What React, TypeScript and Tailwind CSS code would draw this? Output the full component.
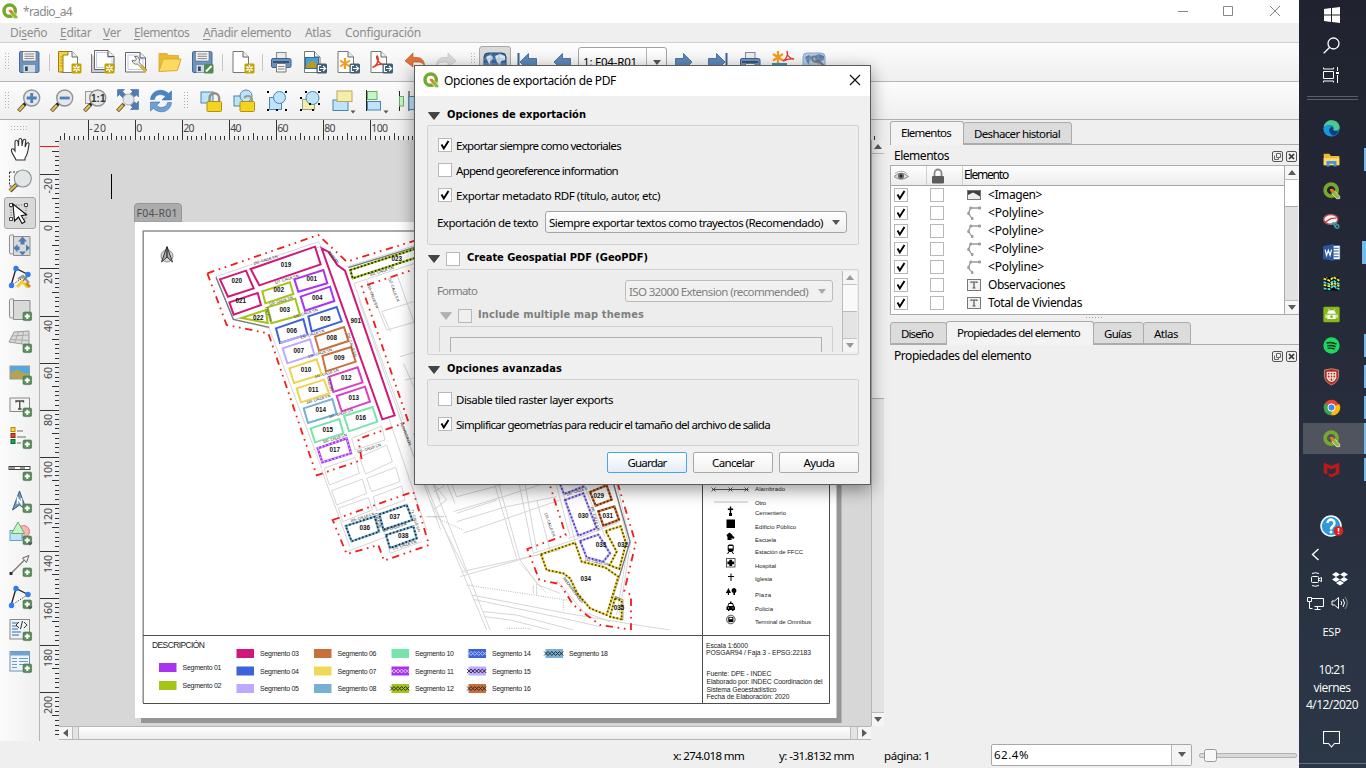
import React, { useLayoutEffect, useRef } from "react";

/* ---------- text helper: tracks a label out to a given width ---------- */
function Fit({ w, children, className = "" }: { w: number; children: string; className?: string }) {
  const ref = useRef<HTMLSpanElement>(null);
  useLayoutEffect(() => {
    const el = ref.current;
    if (!el) return;
    el.style.letterSpacing = "0px";
    const natural = el.getBoundingClientRect().width;
    el.style.letterSpacing = (w - natural) / children.length + "px";
  }, [w, children]);
  return (
    <span ref={ref} className={"inline-block whitespace-pre " + className}>
      {children}
    </span>
  );
}

function Ic({ children, s = 24 }: { children: React.ReactNode; s?: number }) {
  return (
    <svg width={s} height={s} viewBox="0 0 24 24" fill="none" className="shrink-0 overflow-visible">
      {children}
    </svg>
  );
}

/* ---------- shared icon parts ---------- */
const Plus = () => (
  <g>
    <rect x="15" y="15" width="8.6" height="8.6" rx="1.4" fill="#5a8c5a" stroke="#3f7043" strokeWidth=".6" />
    <path d="M19.3 16.7v5.2M16.7 19.3h5.2" stroke="#fff" strokeWidth="2" />
  </g>
);
const Star = () => (
  <g>
    <rect x="13.5" y="13.5" width="10" height="10" rx="1.4" fill="#c4a000" />
    <path d="M18.5 14.7v7.6M15.2 16.6l6.6 3.8M21.8 16.6l-6.6 3.8" stroke="#fff" strokeWidth="1.5" />
    <circle cx="18.5" cy="18.5" r="1.1" fill="#c4a000" />
  </g>
);
const Export = () => (
  <g>
    <rect x="13.5" y="13.5" width="10.5" height="10" rx="1.5" fill="#3f5f74" />
    <path d="M18 15.5h-2.6v6H18M17 18.5h5M20 16l2.6 2.5L20 21" stroke="#fff" strokeWidth="1.2" />
  </g>
);
const Page = ({ x = 3 }: { x?: number }) => (
  <g>
    <path d={`M${x} 1.5h10l5.500 5.500v15.500h-15.500z`} fill="#fff" stroke="#777" />
    <path d={`M${x + 10} 1.5v5.500h5.500`} fill="#eee" stroke="#666" />
  </g>
);
const Glass = ({ children }: { children?: React.ReactNode }) => (
  <g>
    <path d="M8 15l-6.500 7" stroke="#555" strokeWidth="4" />
    <path d="M7 16l-5 5.500" stroke="#f0c030" strokeWidth="2.200" />
    <path d="M9.500 13.500l-2.500 2.500" stroke="#222" strokeWidth="3" />
    <circle cx="14.700" cy="9" r="8" fill="#e4e8ea" stroke="#8d9396" strokeWidth="1.400" />
    {children}
  </g>
);
const Disk = () => (
  <g>
    <rect x="2.500" y="1.500" width="19.500" height="21" rx="1.500" fill="#6b93bf" stroke="#456b95" />
    <rect x="5.500" y="1.500" width="13.500" height="9.500" fill="#f1f1f1" stroke="#666" strokeWidth=".6" />
    <path d="M7.500 4h9.500M7.500 6.300h9.500M7.500 8.600h9.500" stroke="#888" />
    <rect x="6.500" y="15" width="11.500" height="7.500" fill="#d5d9dc" />
    <rect x="8" y="16.500" width="2.800" height="4.500" fill="#2e4f76" />
  </g>
);
const Printer = () => (
  <g>
    <rect x="7.500" y="2.500" width="9.500" height="6" fill="#ececec" stroke="#888" />
    <rect x="2.500" y="8.500" width="19.500" height="9" rx="1.500" fill="#6b93bf" stroke="#3c6390" />
    <path d="M4 12h16" stroke="#31557f" strokeWidth="2" />
    <path d="M7.500 13.500h9.500v8.500h-9.500z" fill="#f4f4f4" stroke="#777" />
    <path d="M9 16.500h6.500M9 19h6.500" stroke="#888" />
  </g>
);
const Qgis = () => (
  <g>
    <circle cx="11.500" cy="11.500" r="8.500" stroke="#75a82c" strokeWidth="5.200" />
    <path d="M13 13h4l6.500 7v3.500h-4.500l-6-6.500z" fill="#8fb93a" stroke="#f4f7ea" strokeWidth="1" />
    <path d="M10 10h4l3 3.500-3.500 2.500-3.500-3.500z" fill="#ee7913" />
  </g>
);
const Arrow = ({ flip = false, bar = false, color = "#5b87b8" }: { flip?: boolean; bar?: boolean; color?: string }) => (
  <Ic>
    <g transform={flip ? "matrix(-1 0 0 1 24 0)" : undefined}>
      <path d="M3.500 8.500h8v-5l8.500 8.500-8.500 8.500v-5h-8z" fill={color} stroke="#3b648f" strokeWidth=".8" />
      {bar && <path d="M21.500 3v18" stroke="#3b648f" strokeWidth="2" />}
    </g>
  </Ic>
);
const Caret = () => <path d="M19.500 21.500h5l-2.500 3z" fill="#555" />;

function Grip({ v = true }: { v?: boolean }) {
  return v ? (
    <svg width="5" height="18" className="shrink-0">
      {[0, 3, 6, 9, 12, 15].map((y) => (
        <path key={y} d={`M0 ${y + 0.5}h1M3 ${y + 0.5}h1`} stroke="#b0b0b0" />
      ))}
    </svg>
  ) : (
    <svg width="17" height="5" className="shrink-0">
      {[0, 3, 6, 9, 12, 15].map((x) => (
        <path key={x} d={`M${x} .5h1M${x} 3.500h1`} stroke="#b0b0b0" />
      ))}
    </svg>
  );
}

const Cell = ({ children, w = "w-[33px]" }: { children: React.ReactNode; w?: string }) => (
  <div className={"flex shrink-0 items-center justify-center " + w}>{children}</div>
);
const Sep = ({ w = "w-[8px]" }: { w?: string }) => (
  <div className={"flex shrink-0 justify-center " + w}>
    <div className="h-[17px] w-px bg-[#c6c6c6]" />
  </div>
);

function Toolbar1() {
  return (
    <div className="flex h-[39px] items-center border-b border-[#b5b5b5] bg-gradient-to-b from-[#fcfcfc] to-[#efefef]">
      <div className="w-[12px] pl-[5px]"><Grip /></div>
      <Cell><Ic><Disk /></Ic></Cell>
      <Sep />
      <Cell><Ic><Page x={4} /><path d="M.5 1.500h9.500v3.500h-5v17h-4.500z" fill="#f5d33f" stroke="#9b8018" /><path d="M2.500 7h2M2.500 10h2M2.500 13h2M2.500 16h2" stroke="#9b8018" strokeWidth=".8" /><Star /></Ic></Cell>
      <Cell><Ic><path d="M.5 4v18.500h15" fill="#ccc" stroke="#777" /><path d="M3.500.5h13.500l6 6v13h-19.500z" fill="#fff" stroke="#666" /><path d="M5.500 2.500h11v5h4.500v10h-15.500z" stroke="#b9cdf0" /><path d="M17 .5v6h6" stroke="#555" fill="#eee" /><Star /></Ic></Cell>
      <Cell><Ic><path d="M1.500 2.500h14.500l5.500 5.500v14h-20z" fill="#fff" stroke="#666" /><path d="M4 5h10v4h5v10.500h-15z" stroke="#b9cdf0" /><path d="M16 2.500v5.500h5.500" stroke="#555" fill="#eee" /><path d="M10.500 6.500l2 2.500-1.500 2-2.800-.8a4 4 0 0 0 5.300 3.800l7.500 8 2-2-8-7.500a4 4 0 0 0-4.500-6z" fill="#eee" stroke="#666" strokeWidth=".9" /><path d="M16.500 15.500l5.500 6" stroke="#d8b43a" strokeWidth="3" /></Ic></Cell>
      <Cell><Ic><path d="M2 21v-17.500h8l1.500 2h10v3.500" fill="#eeb92f" stroke="#e0b040" /><path d="M2 21.500l4-12.500h18l-3.500 11.500z" fill="#fadb60" stroke="#d9aa38" /></Ic></Cell>
      <Cell><Ic><Disk /><rect x="14" y="14" width="9.500" height="9.500" rx="1.500" fill="#4f8a55" /><path d="M16 21.500l5.500-5.500" stroke="#fff" strokeWidth="2" /></Ic></Cell>
      <Sep />
      <Cell w="w-[34px]"><Ic><Page x={2} /><Star /></Ic></Cell>
      <Sep w="w-[4px]" />
      <Cell w="w-[34px]"><Ic><Printer /></Ic></Cell>
      <Cell><Ic><Page x={1.5} /><rect x="2.500" y="7.500" width="13" height="11" fill="#47a0dd" stroke="#2c6fa0" /><path d="M3 15l6-4.500 6 3v4.500h-12z" fill="#b49a2e" /><Export /></Ic></Cell>
      <Cell><Ic><Page x={2} /><path d="M9 8v11M4 10.500l10 6M14 10.500l-10 6" stroke="#f79a1c" strokeWidth="2" /><Export /></Ic></Cell>
      <Cell><Ic><Page x={2} /><path d="M3.500 17.500c5-2 7-8 5-11.500-2.500 0 1 9 7 8.500-3-1.500-8 .5-12 3z" stroke="#e23a2a" strokeWidth="1.500" /><Export /></Ic></Cell>
      <Cell><Ic><path d="M3 11l8-8v4.500h4c5 0 7.500 4 7.500 8-2-3-4-3.500-7.500-3.500h-4v5z" fill="#e0743a" stroke="#c05a22" strokeWidth=".7" /></Ic></Cell>
      <Cell><Ic><path d="M21 11l-8-8v4.500h-4c-5 0-7.500 4-7.500 8 2-3 4-3.500 7.500-3.500h4v5z" fill="#d9dcd9" stroke="#c3c6c3" strokeWidth=".7" /></Ic></Cell>
      <div className="flex w-[16px] shrink-0 justify-center pl-1"><Grip /></div>
      <div className="flex h-[32px] w-[32px] shrink-0 items-center justify-center rounded-[3px] border border-[#a8a8a8] bg-[#dadada]"><Globe /></div>
      <Cell w="w-[34px]"><Arrow flip bar /></Cell>
      <Cell><Arrow flip /></Cell>
      <div className="flex h-[31px] w-[89px] shrink-0 items-center rounded-[3px] border border-[#a3a3a3] bg-gradient-to-b from-white to-[#efefef]">
        <div className="h-full w-[68px] border-r border-[#b5b5b5] pl-[4px] pt-[6px] leading-[16px] text-[11.5px]"><Fit w={54}>1: F04-R01</Fit></div>
        <div className="flex w-[19px] justify-center pt-0"><svg width="8" height="5"><path d="M0 0h8L4 5z" fill="#555" /></svg></div>
      </div>
      <Cell><Arrow /></Cell>
      <Cell><Arrow bar /></Cell>
      <Cell><Ic><Printer /></Ic></Cell>
      <Cell><Ic><path d="M7 1v12M2 4l10 6.500M12 4l-10 6.500" stroke="#f79a1c" strokeWidth="2.200" /><path d="M12 11c4-2 5-7 4-10 0 5 3 8 7 8-4-.5-7 0-11 2z" stroke="#e23a2a" strokeWidth="1.400" /><rect x="1" y="13" width="15" height="9" fill="#3a8fc0" /></Ic></Cell>
      <Cell w="w-[30px]"><Globe tool /></Cell>
    </div>
  );
}
function Globe({ tool = false }: { tool?: boolean }) {
  return (
    <Ic>
      <rect x="1" y="3" width="22" height="18" rx="4" fill={tool ? "#b6cbe2" : "#3e6a9d"} stroke={tool ? "#8aa6c4" : "#274a73"} />
      <path d="M3 7l4-2 3 2-1 3-2 1v4l-2-3zM12 6l5-2 5 2v4l-4 1-1 4-3-3z" fill={tool ? "#557fae" : "#dfe9f2"} />
      <path d="M1 9h22M1 14h22M8 3v18M16 3v18" stroke="#9bb9d6" strokeWidth=".6" />
      {tool && <path d="M12 6a3 3 0 1 0 4 4l6 6" stroke="#777" strokeWidth="2" />}
    </Ic>
  );
}

const Handles = ({ pts }: { pts: number[][] }) => (
  <g>{pts.map(([x, y], i) => <rect key={i} x={x} y={y} width="2" height="2" fill="#000" />)}</g>
);
function Toolbar2() {
  return (
    <div className="flex h-[38px] items-center border-b border-[#b0b0b0] bg-gradient-to-b from-[#fcfcfc] to-[#efefef]">
      <div className="w-[12px] pl-[5px]"><Grip /></div>
      <Cell><Ic><Glass><path d="M14.700 4v10M9.700 9h10" stroke="#4f7fb5" strokeWidth="2.800" /></Glass></Ic></Cell>
      <Cell><Ic><Glass><path d="M9.700 9h10" stroke="#4f7fb5" strokeWidth="2.800" /></Glass></Ic></Cell>
      <Cell><Ic><rect x="2.500" y="2.500" width="12" height="12" fill="#eee" stroke="#999" /><Glass><text x="8" y="12.500" fontSize="10" fontWeight="bold" fill="#333" fontFamily="Liberation Sans, sans-serif">1:1</text></Glass></Ic></Cell>
      <Cell w="w-[34px]"><Ic><path d="M1.500.5h7l-2 2 4 4-3 3-4-4-2 2zM22.500.5v7.500l-2-2-5 4-3-3 4-4.500-2-2zM22.500 20.500h-8l2-2-3-4 3-3 4 3 2-2.500z" fill="#4d7db3" stroke="#335f92" strokeWidth=".5" /><path d="M8 15l-6.500 7" stroke="#555" strokeWidth="4" /><path d="M7 16l-5 5.500" stroke="#f0c030" strokeWidth="2.200" /><circle cx="12.500" cy="10.500" r="5.500" fill="#e5e8ea" stroke="#aaa" /></Ic></Cell>
      <Cell w="w-[32px]"><Ic><path d="M1.500 10.500C2 4 8 0 14 1.500c3 .8 4.500 2 5.500 3l3-2.500v9h-9.500l3.500-3.500c-5-4-11-1-11 3z" fill="#4b84c4" stroke="#2f62a0" strokeWidth=".5" /><path d="M22.500 13.500c-.5 6.500-6.500 10.500-12.500 9-3-.8-4.500-2-5.500-3l-3 2.500v-9h9.500l-3.500 3.500c5 4 11 1 11-3z" fill="#6ca0d8" stroke="#2f62a0" strokeWidth=".5" /></Ic></Cell>
      <div className="flex w-[17px] justify-center pl-[2px]"><Grip /></div>
      <Cell><Ic><rect x="2" y="3" width="12" height="11" fill="#bfe3fa" stroke="#4a85ad" /><path d="M10.500 14v-5a4.800 4.800 0 0 1 9.600 0v5" stroke="#8f8f8f" strokeWidth="2.400" /><rect x="8" y="12.500" width="14.500" height="10" rx="1" fill="#f2d322" stroke="#b29208" /></Ic></Cell>
      <Cell><Ic><rect x="2" y="7" width="13" height="10" fill="#bfe3fa" stroke="#4a85ad" /><circle cx="14" cy="7" r="6" fill="#bfe3fa" stroke="#4a85ad" /><path d="M12 9a4.500 4.500 0 0 1 8 1v4" stroke="#999" strokeWidth="2" /><rect x="8" y="12.500" width="14.500" height="10" rx="1" fill="#f2d322" stroke="#b29208" /></Ic></Cell>
      <Cell><Ic><path d="M4.500 8.500h12v12h-12z" fill="#bfe3fa" stroke="#4a85ad" /><circle cx="14.500" cy="8.500" r="6" fill="#bfe3fa" stroke="#4a85ad" /><Handles pts={[[2, 2], [20, 2], [2, 20], [20, 20], [11, 20]]} /></Ic></Cell>
      <Cell><Ic><path d="M4.500 10.500h12v10h-12z" fill="#f5efa5" stroke="#999" /><circle cx="14.500" cy="9" r="6.500" fill="#bfe3fa" stroke="#4a85ad" /><Handles pts={[[7, 2], [20, 2], [2, 8], [2, 20], [11, 14], [20, 14], [14, 20]]} /></Ic></Cell>
      <Cell><Ic><rect x="2" y="11" width="15" height="10.500" fill="#bfe3fa" stroke="#4a85ad" /><rect x="6" y="2" width="15" height="10.500" fill="#f5efa5" stroke="#b5a66a" /><Caret /></Ic></Cell>
      <Cell><Ic><path d="M2.500 1v21" stroke="#222" /><rect x="3.500" y="2.500" width="9.500" height="8" fill="#c3f6c3" stroke="#69ad69" /><rect x="3.500" y="12.500" width="13" height="8.500" fill="#bfe3fa" stroke="#4a85ad" /><Caret /></Ic></Cell>
      <Cell><Ic><path d="M2.500 2v20M12 2v20" stroke="#222" /><rect x="2.500" y="7.500" width="4" height="9.500" fill="#c3f6c3" stroke="#69ad69" /><rect x="12" y="7.500" width="6" height="13" fill="#bfe3fa" stroke="#4a85ad" /></Ic></Cell>
    </div>
  );
}

/* ---------- left tools ---------- */
const Sheet = () => (
  <g>
    <path d="M5.500 3.500h16.500v19h-16.500z" fill="#d9d9d9" stroke="#8c8c8c" />
    <path d="M5.500 2h-3q-1 0-1 2v15q0 2 1.500 2h1.500q1 0 1-2z" fill="#eee" stroke="#8c8c8c" />
  </g>
);
const Nodes = () => (
  <g>
    <path d="M3 20.500L8 3.500l12 6" stroke="#222" strokeWidth="1.300" />
    <path d="M3 20.500l17-11" stroke="#222" strokeDasharray="1.200 1.500" />
    <circle cx="3.500" cy="20.500" r="2.700" fill="#2d7cf0" />
    <circle cx="8" cy="3.500" r="2.700" fill="#2d7cf0" />
    <circle cx="20" cy="9.500" r="2.700" fill="#2d7cf0" />
  </g>
);
const leftTools: React.ReactNode[] = [
  <g><path d="M8 23c-1-3-3.500-5-4.500-9-.6-2 1-3 2.500-1.500L7 14V5c.3-2.500 2.800-2 3 0l.5 4 .3-6c.5-2.200 2.800-1.800 3 0l.2 6 1-5.500c.7-2 2.700-1.300 2.700 0L17 10l1.500-3.500c1-1.500 3-.5 2.500 1-1 4-.5 9-4 13.500V23z" fill="#fff" stroke="#333" strokeWidth="1.100" /></g>,
  <g><rect x="1.500" y="3" width="15" height="14" stroke="#333" strokeDasharray="2 1.500" /><path d="M9 15l-7 7" stroke="#555" strokeWidth="4" /><path d="M8 16l-6 5.500" stroke="#f0c030" strokeWidth="2.200" /><circle cx="14.800" cy="9.500" r="8.500" fill="#e3e6e7" stroke="#8d9396" strokeWidth="1.200" /></g>,
  <g><rect x="3" y="4" width="15" height="14" stroke="#666" strokeDasharray="1 1.500" /><path d="M1.500 2.500h3v3h-3zM16.500 2.500h3v3h-3zM1.500 16.500h3v3h-3z" fill="#eee" stroke="#444" /><path d="M5 3l1.500 17 4-4 3.500 6.500 3-1.800-3.700-6 5.200-1z" fill="#fff" stroke="#111" strokeWidth="1.100" /></g>,
  <g><Sheet /><path d="M14.500 3.500l4.500 5h-2.500v3h-4v-3h-2.500zM5.500 15l4-4v2.500h2v3.500h-2v2.500zM22 15l-4-3.500v7zM11 18.500h7l-3.500 4z" fill="#4d7db3" /></g>,
  <g><Nodes /><path d="M10 14l5-3 6 7" stroke="#999" strokeWidth="2.500" /><path d="M19 12l-10 9.500" stroke="#777" strokeWidth="1.500" /><path d="M13 15.500l7 7M15 16l-6 6" stroke="#f2cc38" strokeWidth="3" /><path d="M18 18l4 4" stroke="#c88a1c" strokeWidth="3" /></g>,
  <g><Sheet /><Plus /></g>,
  <g><path d="M6 3l15-1v14l-20-3z" fill="#dadada" stroke="#999" /><path d="M4 7l17-1M3 10.500l18 1M10.500 3l-4 11M15.500 2.500l-2 12" stroke="#aaa" /><Plus /></g>,
  <g><rect x="2" y="5" width="19.500" height="13" fill="#4ea9e8" stroke="#999" /><path d="M2.500 12l6-3.500 8 3.500 4.500 1v4.500h-18.500z" fill="#b9a24c" /><Plus /></g>,
  <g><rect x="2" y="5" width="19.500" height="13.500" fill="#f4f4f4" stroke="#888" /><path d="M8 9.500V8h7.500v1.500M11.750 8v8M10 16h3.500" stroke="#444" strokeWidth="1.300" /><Plus /></g>,
  <g><rect x="3" y="2.500" width="4" height="4" fill="#fdd835" stroke="#b8860b" /><rect x="3" y="8.500" width="4" height="4" fill="#e64a19" stroke="#8d2a0a" /><rect x="3" y="14.500" width="4" height="4" fill="#18a558" stroke="#0b6b36" /><path d="M9 6h6M9 12h9M9 18h4" stroke="#999" strokeWidth="1.500" /><Plus /></g>,
  <g><rect x="1" y="9.500" width="21" height="3" fill="#fff" stroke="#444" /><path d="M2 11h5M12 11h5" stroke="#999" strokeWidth="2" /><Plus /></g>,
  <g><path d="M11.500 2l7 19-7-5-7 5z" fill="#6d9bc8" stroke="#38597c" /><path d="M9.500 15V9l4 6V9" stroke="#fff" strokeWidth="1.500" /><Plus /></g>,
  <g><circle cx="15.500" cy="10.500" r="6" fill="#f8b5b5" stroke="#df7777" /><rect x="2" y="9.500" width="12" height="10" fill="#bfe3fa" stroke="#6aa2c7" /><path d="M10 1l6.500 11.500h-13z" fill="#c3f6c3" stroke="#69ad69" /><Plus /><Caret /></g>,
  <g><path d="M3 20.500L19 4.500" stroke="#777" strokeWidth="1.200" /><path d="M14.500 5l6.500-2.500-2.500 7z" fill="#eee" stroke="#666" /><rect x="1.500" y="19" width="3" height="3" fill="#333" /><Plus /></g>,
  <g><Nodes /><Plus /><Caret /></g>,
  <g><rect x="2" y="2.500" width="19.500" height="19.500" fill="#eef2f5" stroke="#888" /><path d="M4 6h6M4 9h5M4 12h6M4 15h9M4 18h7" stroke="#6b9bc8" strokeWidth="1.500" /><path d="M11 5l-3 3 3 3M16 5l3 3-3 3M14.500 4l-2 8" stroke="#333" /><Plus /></g>,
  <g><rect x="2" y="2.500" width="19.500" height="19.500" fill="#eef4f9" stroke="#6b93b8" /><path d="M2.500 4.500h19" stroke="#6fa3d0" strokeWidth="4" /><path d="M4 9.500h5M11 9.500h9M4 12.500h5M11 12.500h9M4 15.500h5M11 15.500h9M4 18.500h5" stroke="#6b9bc8" /><Plus /></g>,
];

function LeftTools() {
  return (
    <div className="flex h-[621px] w-[40px] shrink-0 flex-col items-center border-r border-[#b5b5b5] bg-gradient-to-r from-[#fbfbfb] to-[#efefef] pt-[6px]">
      <div className="mb-[2px] h-[5px]"><Grip v={false} /></div>
      {leftTools.map((t, i) => (
        <div key={i} className={"flex h-[32px] w-[32px] shrink-0 items-center justify-center " + (i === 2 ? "rounded-[3px] border border-[#a5a5a5] bg-[#d9d9d9]" : "")}>
          <Ic>{t}</Ic>
        </div>
      ))}
    </div>
  );
}

/* ---------- rulers ---------- */
const U = 2.3525;
function TopRuler() {
  const ticks: React.ReactNode[] = [];
  for (let v = -32; v < 316; v += 2) {
    const x = Math.round(94.9 + v * U) + 0.5;
    const h = v % 20 === 0 ? 20 : v % 10 === 0 ? 7 : 4;
    ticks.push(<path key={v} d={`M${x} ${20 - h}v${h}`} stroke="#333" />);
    if (v % 20 === 0) ticks.push(<text key={"t" + v} x={x + 0.8} y="11.500" fontSize="10.500" fill="#444" textLength={String(v).length * 5.6}>{v}</text>);
  }
  return <svg width="844" height="20" className="block shrink-0" fontFamily="Noto Sans, sans-serif">{ticks}</svg>;
}
function SideRuler() {
  const ticks: React.ReactNode[] = [];
  for (let v = -34; v <= 218; v += 2) {
    const y = Math.round(81.4 + v * U) + 0.5;
    const h = v % 20 === 0 ? 19 : v % 10 === 0 ? 7 : 4;
    ticks.push(<path key={v} d={`M${19 - h} ${y}h${h}`} stroke="#333" />);
    if (v % 20 === 0) ticks.push(<text key={"t" + v} transform={`translate(11.500 ${y + 3.5}) rotate(-90)`} textAnchor="end" fontSize="10.500" fill="#444">{v}</text>);
  }
  return (
    <svg width="19" height="600" className="block shrink-0" fontFamily="Noto Sans, sans-serif">
      {ticks}
      <path d="M0 6.500h19" stroke="#f01818" />
    </svg>
  );
}

/* ---------- map ---------- */
const blocks: [string, string, string, number, number][] = [
  ["152,147 345,80 362,133 178,196", "#d01878", "019", 258, 142],
  ["60,178 138,152 161,205 84,230", "#d01878", "020", 110, 188],
  ["88,247 173,219 183,255 101,284", "#d01878", "021", 122, 249],
  ["187,214 270,187 280,222 196,250", "#a4c417", "002", 236, 217],
  ["203,262 286,236 300,286 214,310", "#a4c417", "003", 254, 277],
  ["125,294 197,270 203,309", "#a4c417", "022", 175, 301],
  ["283,178 370,150 382,190 295,215", "#a934f0", "001", 335, 182],
  ["302,230 390,200 403,243 315,272", "#a934f0", "004", 352, 240],
  ["325,289 410,261 425,304 335,334", "#3c62dc", "005", 376, 304],
  ["228,325 310,297 322,343 240,369", "#3c62dc", "006", 275, 339],
  ["248,385 330,358 343,404 262,430", "#bbaaff", "007", 296, 398],
  ["345,350 432,321 445,363 357,392", "#c8703c", "008", 395, 361],
  ["367,408 453,381 467,425 378,454", "#c8703c", "009", 418, 421],
  ["268,445 350,418 365,463 282,489", "#eed350", "010", 318, 457],
  ["388,470 473,442 488,487 400,516", "#d840c8", "012", 439, 481],
  ["290,505 372,479 387,520 303,547", "#eed350", "011", 340, 516],
  ["410,528 495,500 510,545 425,574", "#d840c8", "013", 461, 541],
  ["311,565 397,537 410,582 324,609", "#78b0d4", "014", 362, 577],
  ["432,588 518,561 532,605 447,634", "#78e4ac", "016", 482, 601],
  ["332,625 418,597 430,640 345,667", "#78e4ac", "015", 383, 637],
];
const hatched: [string, string, string, string, number, number][] = [
  ["353,685 440,655 453,700 367,727", "#a934f0", "#d9b0f8", "017", 404, 696],
  ["437,918 524,890 537,935 455,964", "#78b0d4", "#1c2c38", "036", 494, 931],
  ["538,883 620,855 637,900 550,929", "#78b0d4", "#1c2c38", "037", 584, 896],
  ["558,945 640,919 650,955 570,984", "#78b0d4", "#1c2c38", "038", 610, 955],
  ["451,150 690,72 694,98 458,175", "#a4c417", "#222", "023", 590, 122],
  ["1080,792 1150,792 1150,800 1092,822", "#bbaaff", "#4a3fa0", "", 0, 0],
  ["1095,840 1150,820 1190,925 1135,947", "#bbaaff", "#4a3fa0", "030", 1150, 895],
  ["1140,963 1195,944 1230,1000 1210,1025 1160,1012", "#bbaaff", "#4a3fa0", "033", 1203, 982],
  ["1170,816 1220,796 1235,839 1187,857", "#c8703c", "#5b2a10", "029", 1196, 834],
  ["1195,874 1243,859 1257,899 1210,917", "#c8703c", "#5b2a10", "031", 1223, 893],
  ["1217,933 1262,919 1278,970 1258,1047 1229,1036 1250,995", "#eed350", "#4c430c", "032", 1268, 982],
  ["1023,1003 1125,968 1145,1025 1215,1042 1255,1070 1220,1185 1170,1165 1132,1120 1110,1075 1090,1060 1040,1050", "#eed350", "#4c430c", "034", 1157, 1083],
  ["1245,1135 1265,1142 1265,1198 1230,1190", "#eed350", "#4c430c", "035", 1257, 1170],
];
const red = [
  "M22 160L355 45L440 125L690 48M22 160L80 315L205 340L350 766L485 720L475 657L625 605L485 200L690 132",
  "M398 900L640 815L687 975L552 1022L535 975L440 1002Z",
  "M1040 765L1097 945L982 987L1018 1080L1080 1092L1120 1155L1200 1215L1293 1229V1125L1273 1113L1307 970L1250 780",
];
const streets = [
  "M48 170L355 65L370 90M48 170L100 298L208 325L365 745M440 140L650 75M462 190L700 112M100 298L125 293",
  "M462 190L610 600M475 235L645 720M500 180L560 330L650 305M590 160L650 330M545 275L640 245M600 410L650 395M610 430L650 520M615 480L660 470M545 275L572 335",
  "M455 655L545 618L555 660L465 690ZM478 712L560 675L577 725L497 762ZM372 745L465 712L478 760L388 795ZM395 812L487 777L500 820L410 855ZM415 865L505 833L517 870L428 905ZM500 775L587 742L600 785L515 815ZM520 830L605 798L615 840L530 872Z",
  "M565 590L680 930M595 580L722 930M630 680L860 1230M655 680L870 1230M640 640L720 840M665 635L730 790M700 790L740 840L700 870M680 890H730",
  "M440 995L560 950M540 880L570 1000L665 965M365 750L450 980M100 165L360 80",
  "M690 840L800 1060M700 815L730 800L740 770M740 790L765 850M750 780L770 830L960 780M760 875L910 830L1080 775M770 905L920 860L1070 830M790 940L1080 840M880 780L950 1015M893 780L960 1020M770 880L890 840M955 780L1000 1000M973 780L1010 990M1010 840L1050 990M780 1070L1115 975M785 1055L1080 990M960 1020L1015 1095L1080 1120",
  "M815 1125L1100 1180L1310 1215L1410 1230M820 1138L1090 1195L1200 1220M850 1175L950 1185L1120 1230M855 1190L930 1200L1050 1230M1000 1095V1120M1010 1090V1125M1070 1080L1150 1175L1230 1205",
  "M1065 778L1110 950M1080 778L1125 965M1000 1000L1130 957L1260 905M1150 790L1215 950M1240 785L1285 970L1250 1185M1247 780L1292 970L1258 1180M1150 825L1200 805M1105 955L1255 905",
];
const dotted = "M700 890L790 930M800 1095L1100 1140M960 1030L1040 1120M1090 1140V1175M920 1225H990V1232M680 890H740";
const streetNames: [number, number, number, string][] = [
  [162, 134, -17, "252 - CALLE S N"], [225, 192, -17, "127 - CALLE S N"], [208, 257, -17, "129 - CALLE S N"], [282, 294, -17, "132 - CALLE S N"],
  [302, 357, -17, "135 - CALLE S N"], [325, 414, -17, "138 - CALLE S N"], [345, 475, -17, "141 - CALLE S N"], [320, 552, -17, "144 - CALLE S N"],
  [388, 595, -17, "147 - CALLE S N"], [370, 670, -17, "150 - CALLE S N"], [472, 700, -17, "103 - CALLE S N"], [383, 97, 52, "BOULEVARD"],
  [502, 195, 70, "110 - CALLE S N"], [565, 175, 70, "112 - CALLE S N"], [510, 168, -17, "102 - CALLE S N"], [600, 610, 68, "RUTA PROVINCIAL"],
  [452, 907, -17, "165 - CALLE S N"], [548, 937, -17, "168 - CALLE S N"], [578, 990, -17, "170 - CALLE S N"], [632, 870, 72, "71 - CALLE S N"], [525, 880, 75, "CALLE S N"],
  [1033, 880, 70, "133 - CALLE S N"], [1100, 827, -17, "140 - CALLE S"], [1172, 860, 75, "141 - CALLE S N"], [1153, 1022, 12, "144 - CALLE S N"], [1088, 1075, 53, "RAMON S FERNANDEZ S"],
  [195, 262, 72, "CALLE S N"], [440, 340, 72, "134 - CALLE S N"], [380, 470, 75, "CALLE S N"],
];
const legendRows: [number, number, string, string, string | null][] = [
  [159, 667.5, "01", "#a934f0", null], [159, 685.5, "02", "#a4c417", null],
  [236.5, 653.5, "03", "#d01878", null], [236.5, 671, "04", "#3c62dc", null], [236.5, 688.5, "05", "#bbaaff", null],
  [314, 653.5, "06", "#c8703c", null], [314, 671, "07", "#eed958", null], [314, 688.5, "08", "#78b0d4", null],
  [391.5, 653.5, "10", "#78e4ac", null], [391.5, 671, "11", "#a934f0", "#e8c8ff"], [391.5, 688.5, "12", "#a4c417", "#222"],
  [468.5, 653.5, "14", "#3c62dc", "#b8c8ff"], [468.5, 671, "15", "#bbaaff", "#222"], [468.5, 688.5, "16", "#c8703c", "#222"],
  [545.5, 653.5, "18", "#78b0d4", "#222"],
];
const symbols: [string, number, number, number, React.ReactNode][] = [
  ["Alambrado", 491, 30, 755, <path d="M-18 -1.500h36M-19 -3.500l4 4M-15 -3.500l-4 4M-2 -3.500l4 4M2 -3.500l-4 4M14 -3.500l4 4M18 -3.500l-4 4" stroke="#333" strokeWidth=".8" fill="none" />],
  ["Otro", 505, 11, 755, <path d="M-16 -3h33" stroke="#666" strokeDasharray="1 1" strokeWidth=".8" />],
  ["Cementerio", 515, 31, 755, <path d="M-.7 -8.500h1.400v2h2v1.400h-2v5h-1.400v-5h-2v-1.400h2zM-1.500 -2h3v3h-3z" />],
  ["Edificio Público", 529, 41, 755, <rect x="-4" y="-9.500" width="8.500" height="8.500" />],
  ["Escuela", 542, 21, 755, <path d="M-4 -7l3-2.500 3 2.500v1l2 1-1 2-2-1v2h-4v-3z" />],
  ["Estación de FFCC", 554, 48, 755, <g><rect x="-2.800" y="-9.500" width="6" height="7" rx="1.500" /><rect x="-1.800" y="-8" width="4" height="2.500" fill="#fff" /><path d="M-3 0l1.500-2.500h3L3 0" fill="none" stroke="#000" /></g>],
  ["Hospital", 568, 21, 755, <g><rect x="-4" y="-9.500" width="8.500" height="8.500" fill="#fff" stroke="#333" strokeWidth=".8" /><path d="M-1.200 -8.300h2.800v1.800h1.900v2.700h-1.900v1.800h-2.800v-1.800h-1.900v-2.700h1.900z" /></g>],
  ["Iglesia", 581, 17, 755, <path d="M.5 -7.500v7.500M-2.500 -4.500h6" stroke="#000" />],
  ["Plaza", 597, 16, 755, <path d="M-2 -9l2.500 5h-2v2h-1.200v-2h-2zM3.500 -9c2.500 0 3.500 4 1 5v2h-1.600v-2c-3-1-2-5 .6-5z" />],
  ["Policía", 611, 18, 755, <path fillRule="evenodd" d="M-2 -8h4.500l1 3 1 1v3h-1.500v1h-1.500v-1h-2.500v1h-1.500v-1h-1.500v-3l1-1zM-1.500 -7l-.6 2h4.500l-.6-2zM-2.500 -3.500h1v1h-1zM2 -3.500h1v1h-1zM-.5 -9.500h1.500v1.500h-1.500z" />],
  ["Terminal de Omnibus", 624, 56, 755, <g><circle cx=".3" cy="-4.500" r="4.300" fill="#ddd" stroke="#333" strokeWidth=".8" /><rect x="-2.200" y="-7" width="5" height="5" rx=".8" /><rect x="-1.200" y="-6.300" width="3" height="1.500" fill="#fff" /></g>],
];
const credits: [string, number, number, number][] = [
  ["Escala 1:6000", 706, 648, 42], ["POSGAR94 / Faja 3 - EPSG:22183", 706, 655, 105], ["Fuente: DPE - INDEC", 706.5, 676, 65],
  ["Elaborado por: INDEC Coordinación del", 706.5, 684, 116], ["Sistema Geoestadístico", 706.5, 692, 70], ["Fecha de Elaboración: 2020", 706.5, 698.500, 83],
];

function MapCanvas() {
  return (
    <svg width="812" height="586" viewBox="59 140 812 586" className="block shrink-0 bg-[#d7d7d7]" fontFamily="Liberation Sans, Arial, sans-serif">
      <path d="M111.500 174v25" stroke="#000" />
      <path d="M134.500 222v-15q0-3.500 3.500-3.500h40q3.500 0 3.500 3.500v15z" fill="#acacac" stroke="#969696" />
      <text x="136.500" y="217" fontSize="10.500" fill="#505050" textLength="41" fontFamily="Noto Sans, sans-serif">F04-R01</text>
      <rect x="141" y="228" width="700.500" height="495" fill="#969696" />
      <rect x="135" y="222" width="701.500" height="496" fill="#fff" />
      <g transform="translate(167 256)">
        <circle cx="0" cy="0" r="6" fill="#d5d5d5" stroke="#777" strokeWidth=".8" />
        <path d="M0 -9.500l5.500 15.500-5.500-5-5.500 5z" fill="#aaa" stroke="#222" strokeWidth=".9" />
        <path d="M0 -9v10" stroke="#111" />
      </g>
      <defs><clipPath id="mapclip"><rect x="143" y="232" width="559" height="398" /></clipPath></defs>
      <g clipPath="url(#mapclip)">
        <g transform="translate(200 220) scale(.33333)" fill="none">
          {streets.map((d, i) => <path key={i} d={d} stroke="#d6d6d6" strokeWidth="3" />)}
          <path d={dotted} stroke="#bbb" strokeWidth="3" strokeDasharray="3 4" />
          <path d="M48 172L100 298L208 322M445 143L690 68M1226 1170L1258 1070L1290 965L1240 790M1245 1130L1268 1140V1200" stroke="#777" strokeWidth="4" />
          {red.map((d, i) => <path key={i} d={d} stroke="#f21d1d" strokeWidth="5.500" strokeDasharray="22 14 5 14 5 14" />)}
          <path d="M365 85L385 95L412 135L435 152L584 586L547 598Z" stroke="#d01878" strokeWidth="6" />
          {blocks.map(([p, c], i) => <polygon key={i} points={p} stroke={c} strokeWidth="6" fill="#fff" />)}
          <path d="M241 369l81-26" stroke="#bbaaff" strokeWidth="6" />
          {hatched.map(([p, c, h], i) => (
            <g key={i}>
              <polygon points={p} stroke={c} strokeWidth="7" />
              <polygon points={p} stroke={h} strokeWidth="5" strokeDasharray="5 6" />
            </g>
          ))}
          {streetNames.map(([x, y, r, t], i) => (
            <text key={i} transform={`translate(${x} ${y}) rotate(${r})`} fontSize="11.500" fill="#333" textLength={t.length * 5}>{t}</text>
          ))}
          <g fontSize="19" fontWeight="bold" fill="#111" textAnchor="middle">
            {blocks.map(([, , t, x, y], i) => <text key={i} x={x} y={y}>{t}</text>)}
            {hatched.map(([, , , t, x, y], i) => <text key={i} x={x} y={y}>{t}</text>)}
            <text x="467" y="308">901</text>
          </g>
        </g>
      </g>
      <path d="M143.200 703v-472h686.300" stroke="#8d8d8d" strokeWidth="1.500" fill="none" />
      <path d="M829.500 231v472.500H143M143 635.500h686.500M702.500 484v219.500" stroke="#4c4c4c" fill="none" />
      <text x="152" y="648" fontSize="8.500" fill="#222" textLength="53">DESCRIPCIÓN</text>
      {legendRows.map(([x, y, t, c, h]) => (
        <g key={t}>
          <rect x={x} y={y - 4.5} width="17.500" height="9" fill={c} />
          {h && (
            <path
              d={[-0.5, 0.5, 1.5, 2.5, 3.5].map((k) => `M${x + 0.5 + k * 3.8} ${y - 2}l4 4m0-4l-4 4`).join("")}
              stroke={h}
              fill="none"
              strokeWidth=".9"
            />
          )}
          <text x={x + 23.5} y={y + 2.5} fontSize="7" fill="#222" textLength="39">{"Segmento " + t}</text>
        </g>
      ))}
      {symbols.map(([t, y, w, x, s]) => (
        <g key={t}>
          <g transform={`translate(730.500 ${y})`} fill="#000">{s}</g>
          <text x={x} y={y + 0.3} fontSize="6" fill="#222" textLength={w}>{t}</text>
        </g>
      ))}
      {credits.map(([t, x, y, w]) => <text key={t} x={x} y={y} fontSize="6.800" fill="#222" textLength={w}>{t}</text>)}
    </svg>
  );
}

/* ---------- controls ---------- */
function Check({ on = false, dim = false }: { on?: boolean; dim?: boolean }) {
  return (
    <svg width="14" height="14" className="shrink-0">
      <rect x=".5" y=".5" width="13" height="13" fill={dim ? "#efefef" : "#fff"} stroke="#b8b8b8" />
      {on && <path d="M3.500 6.500l2.300 4 4.700-7.500" fill="none" stroke="#000" strokeWidth="1.900" />}
    </svg>
  );
}
function Tri({ dir, c = "#5a5a5a", w = 8 }: { dir: "up" | "down" | "left" | "right"; c?: string; w?: number }) {
  const d = { up: "M0 5h8L4 0z", down: "M0 0h8L4 5z", left: "M6 0v8L1 4z", right: "M1 0v8l5-4z" }[dir];
  return <svg width={w} height={dir === "up" || dir === "down" ? (w * 5) / 8 : w} viewBox={dir === "up" || dir === "down" ? "0 0 8 5" : "0 0 8 8"}><path d={d} fill={c} /></svg>;
}
const Fold = ({ dim = false }: { dim?: boolean }) => (
  <svg width="12" height="8" className="shrink-0"><path d="M.5.500h11l-5.500 7z" fill={dim ? "#b0b0b0" : "#444"} stroke={dim ? "#aaa" : "#222"} strokeWidth=".7" /></svg>
);
const DockButtons = () => (
  <div className="flex gap-[3px]">
    <svg width="11" height="11" fill="none"><rect x=".5" y=".5" width="10" height="10" rx="1.500" stroke="#555" /><path d="M4.500 2.500h4v4h-4zM2.500 4.500v4h4v-2" stroke="#666" /></svg>
    <svg width="11" height="11" fill="none"><rect x=".5" y=".5" width="10" height="10" rx="1.500" stroke="#555" /><path d="M3 3l5 5M8 3L3 8" stroke="#333" strokeWidth="1.700" /></svg>
  </div>
);

/* ---------- right dock ---------- */
const rows: [string, number, string][] = [
  ["<Imagen>", 54, "img"], ["<Polyline>", 56, "poly"], ["<Polyline>", 56, "poly"], ["<Polyline>", 56, "poly"], ["<Polyline>", 56, "poly"], ["Observaciones", 77, "T"], ["Total de Viviendas", 94, "T"],
];
const RowIcon = ({ k }: { k: string }) => (
  <svg width="15" height="14" fill="none" className="shrink-0">
    {k === "img" && <g><rect x=".5" y="2.500" width="13" height="9" fill="#eee" stroke="#777" /><path d="M1 3h12v5.500l-4-2.500L6 4.500 1 7z" fill="#3f3f3f" /></g>}
    {k === "poly" && <g stroke="#999"><path d="M13 2H3.500L1.500 7.500l3.500 5" strokeWidth="1.300" /><path d="M11.500 1h2v2h-2zM3 1h1.500v2H3zM.8 6.500h1.500v2H.8zM4.500 11.500h1.500v2h-1.500z" fill="#aaa" /></g>}
    {k === "T" && <g><rect x=".5" y="1.500" width="13" height="11" fill="#f2f2f2" stroke="#777" /><path d="M4 5V4h6v1M7 4v6M5.500 10h3" stroke="#555" strokeWidth="1.200" /></g>}
  </svg>
);
const Tab = ({ w, fit, on, children }: { w: string; fit: number; on?: boolean; children: string }) => (
  <div className={"flex items-center rounded-t-[3px] border border-[#ababab] pl-[10px] " + w + (on ? " -mb-px h-[24px] border-b-0 bg-[#f3f3f3] pb-[1px]" : " h-[22px] bg-[#dcdcdc] pt-[1px]")}>
    <Fit w={fit}>{children}</Fit>
  </div>
);
function RightDock() {
  return (
    <div className="flex w-[415px] shrink-0 flex-col bg-[#efefef] pl-[6px] text-[11.5px]">
      <div className="flex h-[25px] shrink-0 items-end border-b border-[#ababab]">
        <Tab w="w-[74px]" fit={50} on>Elementos</Tab>
        <Tab w="w-[109px] -ml-px" fit={86}>Deshacer historial</Tab>
      </div>
      <div className="flex h-[20px] shrink-0 items-center justify-between pl-1 pr-[2px] pt-[2px] text-[12px]"><Fit w={55}>Elementos</Fit><DockButtons /></div>
      <div className="flex h-[150px] shrink-0 border border-r-0 border-[#ababab] bg-white">
        <div className="flex min-w-0 flex-1 flex-col">
          <div className="flex h-[20px] shrink-0 border-b border-[#a5a5a5] bg-gradient-to-b from-white to-[#ececec]">
            <div className="flex w-[36px] items-center border-r border-[#cfcfcf] pl-[2px]">
              <svg width="17" height="12" fill="none"><path d="M1 6.500Q8 0 15.500 6.500Q8 12 1 6.500z" fill="#ddd" stroke="#888" /><circle cx="8" cy="6" r="3" fill="#666" /><circle cx="8" cy="6" r="1.200" fill="#222" /><path d="M2 3.500Q8 -1 14 3.500" stroke="#aaa" /></svg>
            </div>
            <div className="flex w-[36px] items-center border-r border-[#cfcfcf] pl-[4px]">
              <svg width="14" height="16" fill="none"><path d="M3.500 8V5a3.500 3.500 0 0 1 7 0v3" stroke="#888" strokeWidth="1.800" /><rect x="1" y="8" width="12" height="7.500" rx="1" fill="#5c5c5c" /></svg>
            </div>
            <div className="pl-[1px] pt-[1px] text-[12px] leading-[16px]"><Fit w={44}>Elemento</Fit></div>
          </div>
          {rows.map(([t, w, k], i) => (
            <div key={i} className="flex h-[18px] shrink-0 items-center pl-[3px]">
              <div className="w-[36px]"><Check on /></div>
              <div className="w-[37px]"><Check /></div>
              <div className="w-[21px]"><RowIcon k={k} /></div>
              <div className="-mt-[1px] text-[12px] leading-[16px]"><Fit w={w}>{t}</Fit></div>
            </div>
          ))}
        </div>
        <div className="flex w-[14px] flex-col border-l border-[#ababab] bg-[#e2e2e2]">
          <div className="flex h-[14px] items-center justify-center border-b border-[#bbb] bg-[#f6f6f6]"><Tri dir="up" /></div>
          <div className="h-[27px] border-b border-[#ababab] bg-white" />
          <div className="flex-1" />
          <div className="flex h-[14px] items-center justify-center border-t border-[#bbb] bg-[#f6f6f6]"><Tri dir="down" /></div>
        </div>
        <div className="w-[1px] bg-[#f0f0f0]" />
      </div>
      <div className="flex h-[5px] justify-center pt-[1px]"><svg width="17" height="3">{[0, 3, 6, 9, 12, 15].map((x) => <rect key={x} x={x} y="1" width="1" height="1" fill="#a5a5a5" />)}</svg></div>
      <div className="flex h-[25px] shrink-0 items-end border-b border-[#ababab]">
        <Tab w="w-[57px]" fit={32}>Diseño</Tab>
        <Tab w="w-[148px] -ml-px" fit={123} on>Propiedades del elemento</Tab>
        <Tab w="w-[51px] -ml-px" fit={27}>Guías</Tab>
        <Tab w="w-[48px] -ml-px" fit={24}>Atlas</Tab>
      </div>
      <div className="flex h-[20px] shrink-0 items-center justify-between pl-1 pr-[2px] pt-[2px] text-[12px]"><Fit w={137}>Propiedades del elemento</Fit><DockButtons /></div>
    </div>
  );
}

/* ---------- dialog ---------- */
const headFont = " font-bold font-['DejaVu_Sans_Condensed','DejaVu_Sans','Noto_Sans',sans-serif] text-[11px]";
const Option = ({ w, on, children }: { w: number; on?: boolean; children: string }) => (
  <div className="mb-[11px] flex h-[14px] items-center gap-[4px]"><Check on={on} /><span className="pt-[1px]"><Fit w={w}>{children}</Fit></span></div>
);
const Combo = ({ cls, w, dim, children }: { cls: string; w: number; dim?: boolean; children: string }) => (
  <div className={"flex h-[22px] items-center justify-between rounded-[3px] border pl-[3px] pr-[6px] " + cls + (dim ? " border-[#bbb] bg-[#f1f1f1]" : " border-[#a3a3a3] bg-gradient-to-b from-white to-[#eeeeee]")}>
    <span className="pt-[1px]"><Fit w={w}>{children}</Fit></span><Tri dir="down" c={dim ? "#aaa" : "#555"} />
  </div>
);
const Btn = ({ w, main, children }: { w: number; main?: boolean; children: string }) => (
  <div className={"flex h-[21px] w-[80px] items-center justify-center rounded-[2px] border bg-gradient-to-b " + (main ? "border-[#43a6ef] from-white to-[#e4edf5]" : "border-[#a8a8a8] from-white to-[#f1f1f1]")}><Fit w={w}>{children}</Fit></div>
);
function ExportDialog() {
  return (
    <div className="absolute left-[414px] top-[65px] flex h-[420px] w-[457px] flex-col border border-[#5c5c5c] bg-[#f0f0f0] text-[11.5px] shadow-[0_5px_16px_rgba(0,0,0,0.4)]">
      <div className="flex h-[30px] items-center bg-white pb-[2px] pl-[8px] pr-[9px]">
        <Ic s={16}><Qgis /></Ic>
        <span className="ml-[5px] flex-1 pt-[1px] text-[12px]"><Fit w={172}>Opciones de exportación de PDF</Fit></span>
        <svg width="12" height="12"><path d="M1 1l10 10M11 1L1 11" stroke="#111" strokeWidth="1.200" /></svg>
      </div>
      <div className="pl-[12px] pr-[11px]">
        <div className={"flex h-[29px] items-center gap-[7px] pl-[1px] pt-[10px]" + headFont}><Fold /><Fit w={139}>Opciones de exportación</Fit></div>
        <div className="h-[120px] rounded-[2px] border border-[#d2d2d2] bg-[#ededed] pl-[10px] pt-[12px]">
          <Option w={165} on>Exportar siempre como vectoriales</Option>
          <Option w={162}>Append georeference information</Option>
          <Option w={204} on>Exportar metadato RDF (título, autor, etc)</Option>
          <div className="-mt-[2px] flex items-center gap-[7px] -ml-px"><span className="pt-[1px]"><Fit w={101}>Exportación de texto</Fit></span><Combo cls="w-[302px]" w={274}>Siempre exportar textos como trayectos (Recomendado)</Combo></div>
        </div>
        <div className={"flex h-[24px] items-center gap-[7px] pl-[1px] pt-[3px]" + headFont}><Fold /><div className="-ml-px"><Check /></div><Fit w={181}>Create Geospatial PDF (GeoPDF)</Fit></div>
        <div className="flex h-[86px] overflow-hidden rounded-[2px] border border-[#d2d2d2] bg-[#ededed] pb-[2px] pt-[1px] text-[#7f7f7f]">
          <div className="flex w-[405px] flex-col overflow-hidden pl-[9px] pt-[9px]">
            <div className="flex shrink-0 items-center justify-between"><Fit w={40}>Formato</Fit><Combo dim cls="w-[208px]" w={179}>ISO 32000 Extension (recommended)</Combo></div>
            <div className={"flex h-[24px] shrink-0 items-center gap-[6px] pl-[3px] pt-[3px]" + headFont}><Fold dim /><Check dim /><Fit w={166}>Include multiple map themes</Fit></div>
            <div className="ml-[2px] h-[30px] shrink-0 rounded-t-[2px] border border-b-0 border-[#d0d0d0] px-[10px] pt-[10px]"><div className="h-[20px] border border-b-0 border-[#b0b0b0]" /></div>
          </div>
          <div className="ml-[9px] flex w-[15px] flex-col border-l border-[#bbb] bg-[#e4e4e4]">
            <div className="flex h-[14px] items-center justify-center border-b border-[#c4c4c4] bg-[#f5f5f5]"><Tri dir="up" c="#999" /></div>
            <div className="h-[27px] border-b border-[#bbb] bg-[#f9f9f9]" />
            <div className="flex-1" />
            <div className="flex h-[14px] items-center justify-center border-t border-[#c4c4c4] bg-[#f5f5f5]"><Tri dir="down" c="#999" /></div>
          </div>
        </div>
        <div className={"flex h-[24px] items-center gap-[7px] pl-[1px] pt-[5px]" + headFont}><Fold /><Fit w={115}>Opciones avanzadas</Fit></div>
        <div className="h-[67px] rounded-[2px] border border-[#d2d2d2] bg-[#ededed] pl-[10px] pt-[12px]">
          <Option w={157}>Disable tiled raster layer exports</Option>
          <Option w={314} on>Simplificar geometrías para reducir el tamaño del archivo de salida</Option>
        </div>
        <div className="flex justify-end gap-[6px] pt-[6px]"><Btn w={39} main>Guardar</Btn><Btn w={42}>Cancelar</Btn><Btn w={31}>Ayuda</Btn></div>
      </div>
    </div>
  );
}

/* ---------- taskbar ---------- */
const apps: { y: string; on?: number; ic: React.ReactNode }[] = [
  { y: "edge", ic: <g><circle cx="12" cy="12" r="11.500" fill="#1779c9" /><path d="M1 10C2 3 8 .5 12 .5c8 0 12 6 11.500 10.500-.5 4-6 4.500-9 3 2-4-1-7-5-7-5 0-8 3-8.500 3z" fill="#4cc98c" /><path d="M1 11c3-4 9-5 11-1-5 2-4 9 2 12-8 3-14-4-13-11z" fill="#1599d8" /><path d="M12 10c3 0 3 3 2 4 3 2 6 2 8 1-1 3-4 6-8 7-6-3-7-10-2-12z" fill="#0e3f7c" /></g> },
  { y: "folder", on: 1, ic: <g><path d="M1 20V4h8l2 3h12v13z" fill="#f5b82e" /><path d="M1 10h22v10H1z" fill="#ffda6b" /><path d="M5 22v-8h14v8h-4v-4H9v4z" fill="#3f96dc" /></g> },
  { y: "qgis", ic: <Qgis /> },
  { y: "snip", ic: <g><ellipse cx="11" cy="9" rx="10" ry="7" fill="#f3f3f3" stroke="#b8484a" strokeWidth="2" /><path d="M3 13l8-5 8-1" stroke="#c33" strokeWidth="1.600" /><path d="M10 16l10-2M14 13l4 8" stroke="#49a" strokeWidth="2.200" /><circle cx="20" cy="19" r="2.500" stroke="#49a" strokeWidth="2" /></g> },
  { y: "word", on: 2, ic: <g><rect x="12" y="2" width="12" height="20" fill="#fff" stroke="#2b579a" /><path d="M15 6h7M15 10h7M15 14h7M15 18h7" stroke="#2b579a" strokeWidth="1.500" /><path d="M0 3l15-3v24L0 21z" fill="#2b579a" /><path d="M3 8l2 8 2.500-7L10 16l2-8" stroke="#fff" strokeWidth="1.700" /></g> },
  { y: "mesh", ic: <g><path d="M2 3h20v19H2z" fill="#0a0a0a" /><path d="M1 5l8 3 6-5 8 5M1 14l8 2 6-5 8 5" stroke="#f4ea3a" strokeWidth="2.600" strokeDasharray="4 1.500" /><path d="M1 10l8 3 6-5 8 5M1 19l8 1 6-5 8 5" stroke="#4be0e8" strokeWidth="2.600" strokeDasharray="4 1.500" /><path d="M5 3l15 18" stroke="#fff" strokeDasharray="2 3" /></g> },
  { y: "android", ic: <g><rect x=".5" y="1" width="23" height="22" rx="2" fill="#86b817" /><path d="M6 11a6 5 0 0 1 12 0zM6 12.500h12v6H6zM3.500 12h1.500v5H3.500zM19 12h1.500v5H19z" fill="#fff" /><path d="M7.500 4l1.500 3M16.500 4L15 7" stroke="#fff" /><circle cx="12" cy="15" r="2" fill="#86b817" /></g> },
  { y: "spotify", on: 1, ic: <g><circle cx="12" cy="12" r="11.500" fill="#1ed760" /><path d="M5 8.500q7-2 14 1.500M6 12.500q6-1.500 12 1.300M6.500 16q5-1 10 1.200" stroke="#1a2a20" strokeWidth="1.900" /></g> },
  { y: "shield", on: 1, ic: <g><path d="M2 3q10-4 20 0v9q-1 8-10 12Q3 20 2 12z" fill="#b32a1c" stroke="#e9a79e" /><path d="M6 6h12v8q-2 4-6 5-4-1-6-5zM6 10h12M6 14h12M10 6v12M14 6v12" stroke="#fff" strokeWidth="1.500" /></g> },
  { y: "chrome", on: 1, ic: <g><circle cx="12" cy="12" r="11" fill="#e84435" /><path d="M12 12L2.500 6.500A11 11 0 0 0 12 23z" fill="#34a853" /><path d="M12 12l11-5a11 11 0 0 1-11 16z" fill="#fbbc05" /><circle cx="12" cy="12" r="5.500" fill="#fff" /><circle cx="12" cy="12" r="4.200" fill="#4285f4" /></g> },
  { y: "active", on: 1, ic: <Qgis /> },
  { y: "mcafee", on: 1, ic: <path d="M1 2l11 5 11-5v16l-11 5-4-2v-4l4 2 6-3V9l-6 3-6-3v10l-5-2z" fillRule="evenodd" fill="#c01818" /> },
];
function Taskbar() {
  return (
    <div className="flex w-[67px] shrink-0 flex-col bg-gradient-to-b from-[#20222f] to-[#2c3747] font-['Open_Sans','Noto_Sans',sans-serif] text-[12px] text-white">
      <div className="flex h-[30px] items-center justify-center pr-[2px]"><svg width="16" height="16"><path d="M0 2l7-1v6.500H0zM8 .9L16 0v7.500H8zM0 8.500h7V15l-7-1zM8 8.500h8V16l-8-1z" fill="#fff" /></svg></div>
      <div className="flex h-[30px] items-center justify-center pr-[2px]"><svg width="17" height="17" fill="none"><circle cx="10.500" cy="6.500" r="5.500" stroke="#fff" strokeWidth="1.300" /><path d="M6.500 10.500L.7 16.300" stroke="#fff" strokeWidth="1.300" /></svg></div>
      <div className="flex h-[30px] items-center justify-center pr-[2px]"><svg width="17" height="16" fill="none" stroke="#fff"><path d="M.5 4.500h10v7H.5zM.5.500v1.500h10V.500M.5 15.500V14h10v1.500M14.500 0v4M14.500 8v8" /><path d="M13 6h3" strokeWidth="2" /></svg></div>
      <div className="mx-2 mt-[6px] h-[4px] border-y border-[#5b5f6b]" />
      <div className="mt-[13px]">
        {apps.map((a) => (
          <div key={a.y} className={"flex h-[31px] items-center " + (a.y === "active" ? "ml-[4px] bg-[#4f545f] pl-[20px]" : "pl-[24px]")}>
            <Ic s={17}>{a.ic}</Ic>
            <div className="flex-1" />
            {a.on && <div className={"bg-[#76b9ed] " + (a.y === "active" ? "h-[31px] " : "h-[23px] ") + (a.on === 2 ? "w-[4px]" : "w-[2px]")} />}
          </div>
        ))}
      </div>
      <div className="mt-[29px] flex h-[25px] pl-[21px]"><svg width="25" height="25" fill="none"><circle cx="11" cy="12" r="10" fill="#2e9bd6" stroke="#fff" strokeWidth="1.500" /><path d="M7.500 9a3.500 3.500 0 1 1 5.500 3c-1.500 1-2 1.500-2 3.500" stroke="#fff" strokeWidth="2.500" /><circle cx="11" cy="18" r="1.500" fill="#fff" /><circle cx="18.500" cy="17" r="4.800" fill="#e02020" /><path d="M18.500 14v3.500M18.500 18.700v1.300" stroke="#fff" strokeWidth="1.500" /></svg></div>
      <div className="mt-[9px] pl-[12px]"><svg width="9" height="13" fill="none"><path d="M7.500 1L1.500 6.500l6 5.500" stroke="#fff" strokeWidth="1.400" /></svg></div>
      <div className="mt-[10px] flex h-[16px] items-center pl-[10px]">
        <svg width="15" height="15" fill="none" stroke="#fff"><rect x="2.500" y="4.500" width="7" height="6" rx="1" /><path d="M9.500 7l3-1.500v4l-3-1.500M3 1.500q3-1.500 7 0M3 13.500q3 1.500 7 0" /></svg>
        <svg width="16" height="14" viewBox="0 0 16 14" className="ml-[8px]"><path d="M4 0l4 2.500L4 5 0 2.500zM12 0l4 2.500L12 5 8 2.500zM4 5l4 2.500L4 10 0 7.500zM12 5l4 2.500-4 2.500-4-2.500zM8 8.500l4 2.500-4 2.500L4 11z" fill="#fff" /></svg>
      </div>
      <div className="mt-[8px] flex h-[16px] items-center pl-[8px]">
        <svg width="17" height="15" fill="none" stroke="#fff"><path d="M4.500 2.500h12v8h-9M10.500 10.500v3M7.500 13.500h6M.5 1.500h4v4h-4zM2.500 5.500v7h3" /></svg>
        <svg width="17" height="14" fill="none" stroke="#fff" className="ml-[7px]"><path d="M1 5h2.500l4-3.500v11L3.500 9H1z" /><path d="M10 5q1.500 2 0 4M12 3q3 4 0 8" /><path d="M14 1q4.500 6 0 12" stroke="#888" /></svg>
      </div>
      <div className="mt-[12px] flex h-[17px] justify-center pr-[2px] leading-[17px]"><Fit w={18} className="text-[11px]">ESP</Fit></div>
      <div className="mt-[21px] flex flex-col items-center pr-[1px] leading-[17.500px]"><Fit w={27}>10:21</Fit><Fit w={37}>viernes</Fit><Fit w={52}>4/12/2020</Fit></div>
      <div className="mt-[17px] flex justify-center pr-[2px]"><svg width="17" height="17" fill="none"><path d="M.5.500h16v12h-5l-3 3.500-3-3.500h-5z" stroke="#fff" strokeWidth="1.100" /></svg></div>
      <div className="mt-[15px] h-px bg-[#6a707c]" />
    </div>
  );
}

const menus: [string, string, string][] = [
  ["Di", "s", "eño"], ["", "E", "ditar"], ["", "V", "er"], ["", "E", "lementos"], ["", "A", "ñadir elemento"], ["Atlas", "", ""], ["Configuración", "", ""],
];
const menuTrack = ["tracking-[-0.300px]", "tracking-[-0.300px]", "tracking-[-0.200px]", "tracking-[-0.450px]", "tracking-[-0.400px]", "tracking-[-0.350px]", "tracking-[-0.250px]"];
const menuW = ["w-[50px]", "w-[43px]", "w-[31px]", "w-[69px]", "w-[102px]", "w-[40px]", "w-[90px]"];

export default function App() {
  return (
    <div className="relative flex h-[768px] w-[1366px] overflow-hidden bg-[#efefef] font-['Noto_Sans','Open_Sans',sans-serif] text-black">
      <div className="flex w-[1299px] shrink-0 flex-col">
        <div className="flex h-[23px] shrink-0 items-center bg-white pb-[1px] pl-[2px]">
          <Ic s={16}><Qgis /></Ic>
          <span className="ml-[5px] flex-1 pt-[1px] text-[12px] text-[#8a8a8a]"><Fit w={49}>*radio_a4</Fit></span>
          <svg width="104" height="12" fill="none" stroke="#888" className="mr-[18px]"><path d="M1 6.500h10M46.500 1.500h9v9h-9zM93 1l10 10M103 1L93 11" /></svg>
        </div>
        <div className="flex h-[20px] shrink-0 items-center border-b border-[#cfcfcf] bg-[#efefef] pl-[10px] pt-[1px] text-[12px] text-[#8d8d8d]">
          {menus.map(([a, b, c], i) => (
            <div key={i} className={"shrink-0 whitespace-nowrap " + menuW[i] + " " + menuTrack[i]}>{a}<span className="underline underline-offset-2">{b}</span>{c}</div>
          ))}
        </div>
        <Toolbar1 />
        <Toolbar2 />
        <div className="flex h-[621px] shrink-0">
          <LeftTools />
          <div className="flex w-[844px] shrink-0 flex-col overflow-hidden">
            <TopRuler />
            <div className="flex">
              <SideRuler />
              <div className="flex flex-col">
                <MapCanvas />
                <div className="flex h-[14px] w-[812px] border-y border-[#b5b5b5] bg-[#e4e4e4]">
                  <div className="flex w-[14px] items-center justify-center border-r border-[#bbb] bg-[#f5f5f5]"><Tri dir="left" /></div>
                  <div className="w-[6px] border-r border-[#bbb]" />
                  <div className="flex-1 bg-gradient-to-b from-white to-[#ededed]" />
                  <div className="w-[7px] border-l border-[#bbb]" />
                  <div className="flex w-[14px] items-center justify-center border-l border-[#bbb] bg-[#f5f5f5]"><Tri dir="right" /></div>
                </div>
              </div>
              <div className="flex h-[586px] w-[13px] flex-col border-l border-[#b5b5b5] bg-[#e2e2e2]">
                <div className="flex h-[14px] items-center justify-center border-b border-[#bbb] bg-[#f2f2f2]"><Tri dir="up" /></div>
                <div className="h-[245px] border-b border-[#ababab] bg-[#f0f0f0]" />
                <div className="flex-1" />
                <div className="flex h-[14px] items-center justify-center border-t border-[#bbb] bg-[#f5f5f5]"><Tri dir="down" /></div>
              </div>
            </div>
          </div>
          <div className="-mr-[5px] flex w-[5px] items-center justify-center">
            <svg width="3" height="17">{[0, 3, 6, 9, 12, 15].map((y) => <rect key={y} x="1" y={y} width="1" height="1" fill="#a5a5a5" />)}</svg>
          </div>
          <RightDock />
        </div>
        <div className="flex h-[27px] shrink-0 items-center text-[11.5px]">
          <div className="ml-[673px] w-[106px] pt-[2px]"><Fit w={71}>x: 274.018 mm</Fit></div>
          <div className="w-[105px] pt-[2px]"><Fit w={75}>y: -31.8132 mm</Fit></div>
          <div className="w-[107px] pt-[2px]"><Fit w={46}>página: 1</Fit></div>
          <div className="flex h-[22px] w-[201px] rounded-[2px] border border-[#a8a8a8] bg-white">
            <div className="flex flex-1 items-center pl-[2px] pt-[1px]"><Fit w={35}>62.4%</Fit></div>
            <div className="flex w-[20px] items-center justify-center border-l border-[#bbb] bg-[#f4f4f4]"><Tri dir="down" /></div>
          </div>
          <svg width="100" height="16" className="ml-[7px]"><rect x=".5" y="6.500" width="97" height="4" rx="1.500" fill="#d8d8d8" stroke="#b2b2b2" /><rect x="5.500" y="2.500" width="12" height="12" rx="2" fill="#f8f8f8" stroke="#9a9a9a" /></svg>
        </div>
      </div>
      <Taskbar />
      <ExportDialog />
    </div>
  );
}
